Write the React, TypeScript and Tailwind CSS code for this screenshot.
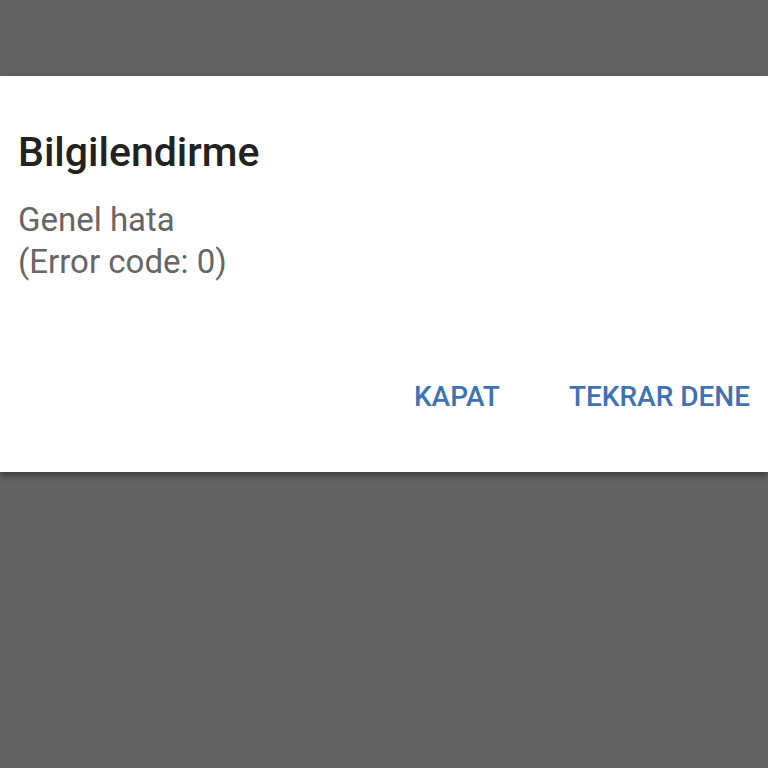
export default function App() {
  return (
    <div
      className="w-[768px] h-[768px] bg-[#626262] flex flex-col overflow-hidden"
      style={{ fontFamily: 'Roboto, "Noto Sans", sans-serif' }}
    >
      <div className="h-[76px] shrink-0" />
      {/* Dialog */}
      <div className="h-[396px] shrink-0 bg-white shadow-[0_4px_6px_rgba(0,0,0,0.35)] flex flex-col px-[18px]">
        <h2 className="mt-[56px] text-[41px] leading-none font-medium text-[#222]">Bilgilendirme</h2>
        <div className="mt-[26px] text-[33px] leading-[42px] text-[#666]">
          <div>Genel hata</div>
          <div>(Error code: 0)</div>
        </div>
        <div className="mt-auto mb-[61px] flex justify-end gap-[69px]">
          <button className="text-[28px] leading-none font-medium text-[#3d72b4]">KAPAT</button>
          <button className="text-[28px] leading-none font-medium text-[#3d72b4]">TEKRAR DENE</button>
        </div>
      </div>
      <div className="flex-1" />
    </div>
  )
}
